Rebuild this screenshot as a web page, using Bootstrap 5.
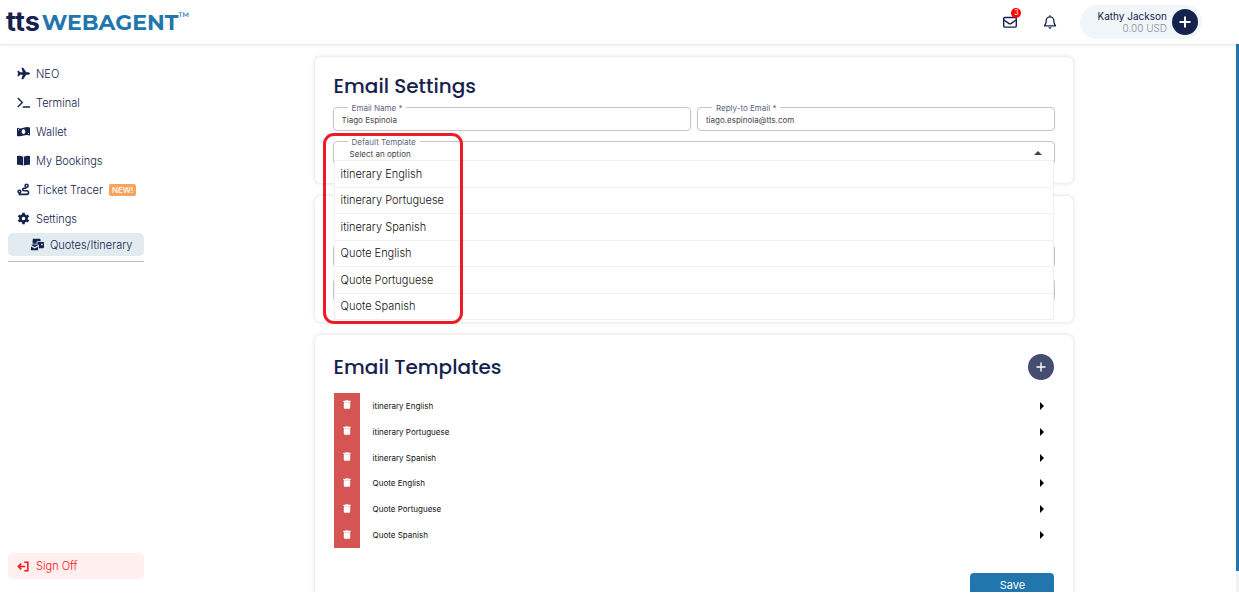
<!DOCTYPE html>
<html lang="en">
<head>
<meta charset="utf-8">
<meta name="viewport" content="width=device-width, initial-scale=1">
<title>Email Settings</title>
<link href="https://cdn.jsdelivr.net/npm/bootstrap@5.3.0/dist/css/bootstrap.min.css" rel="stylesheet">
<style>
:root { --navy: #14224d; --blue: #2176ae; --line: #c3c5d2; }
body { font-family: Inter, "Liberation Sans", sans-serif; font-size: 11px; font-weight: 300; line-height: 16px; color: #111; background: #fff; }
.app { height: 100vh; padding-bottom: 5px; }
.topbar { height: 44px; flex: none; padding: 0 37px 0 6px; box-shadow: 0 1px 3px rgba(0,0,0,.12); z-index: 5; }
.workspace { min-height: 0; }
.brand { font-family: Montserrat, Inter, sans-serif; font-weight: 700; font-size: 22px; line-height: 30px; color: var(--blue); text-decoration: none; }
.brand .web { padding-top: 2px; }
.brand .tts { font-family: Inter, sans-serif; font-size: 27px; color: var(--navy); margin-right: 2px; }
.brand .tm { font-size: 11px; line-height: 14px; font-weight: 500; align-self: flex-start; margin-top: 3px; }
.icon-btn { border: 0; background: none; padding: 0; width: 16px; height: 16px; line-height: 0; color: var(--navy); }
.count { position: absolute; top: -6px; right: -3px; width: 10px; height: 10px; border-radius: 50%; background: #f00; color: #fff; font-size: 7px; line-height: 10px; text-align: center; }
.profile { height: 34px; gap: 5px; padding: 0 4px 0 17px; margin-left: 22px; border-radius: 17px; background: #f0f6f9; color: var(--navy); font-size: 10px; font-weight: 400; line-height: 12px; }
.profile .amount { color: #8a90a0; font-weight: 300; }
.round-btn { width: 26px; height: 26px; border: 0; border-radius: 50%; padding: 0; background: var(--navy); color: #fff; line-height: 0; }
.round-btn.soft { background: #434e71; }
.side { width: 144px; padding: 15px 0 13px 8px; }
.side a { color: #14224d; text-decoration: none; height: 29px; padding-left: 9px; gap: 6px; }
.side svg { width: 13px; height: 13px; color: var(--navy); flex: none; }
.side .current { height: 23px; padding-left: 23px; background: #e1ebf0; border-radius: 5px; }
.side .rule { border-bottom: 1px solid #b9bcc9; height: 6px; }
.side .signoff, .side .signoff svg { color: #f11; }
.side .signoff { height: 26px; background: #ffefef; border-radius: 5px; }
.new-tag { background: #f9a45c; color: #fff; border-radius: 2px; font-size: 8px; line-height: 12px; font-weight: 500; padding: 0 3px; }
.stage { overflow: hidden; padding: 13px 0 0 8px; }
.panels { width: 70%; gap: 13px; }
.panel { border-radius: 6px; padding: 16px 18px; background: #fff; box-shadow: 0 0 4px rgba(0,0,0,.17); }
.short { height: 126px; }
.hidden-fields { gap: 10px; padding-bottom: 20px; }
.list-panel { padding: 19px 19px 16px 18px; }
.panel h2 { font-family: Poppins, Inter, sans-serif; font-weight: 500; font-size: 20px; line-height: 26px; color: var(--navy); margin: 0; padding-left: 1px; }
.pair { gap: 6px; margin: 8px 0 10px; }
.field { position: relative; }
.field label { position: absolute; left: 15px; top: -4px; padding: 0 4px; background: #fff; font-size: 8px; line-height: 10px; font-weight: 400; color: #5d6582; }
.box { display: block; width: 100%; height: 24px; border: 1px solid var(--line); border-radius: 4px; background: #fff; font-size: 8px; font-weight: 400; line-height: 12px; color: #444; padding: 1px 8px 0; appearance: none; }
select.box { padding-left: 16px; }
.caret { position: absolute; right: 13px; top: 10px; border: 4px solid transparent; border-top: 0; border-bottom-color: #444; }
.choices { position: absolute; z-index: 3; top: 19px; left: 1px; right: 1px; height: 160px; display: grid; grid-auto-rows: 1fr; background: #fff; border: 1px solid #f0f0f2; border-top: 0; margin: 0; padding: 0; list-style: none; }
.choices li { border-top: 1px solid #f0f0f2; padding-left: 6px; display: flex; align-items: center; }
.highlight { position: absolute; z-index: 4; left: -10px; top: -8px; width: 140px; height: 191px; border: 3px solid #ed1c24; border-radius: 11px; pointer-events: none; }
.templates { display: grid; grid-auto-rows: 1fr; height: 155px; margin: 13px 0 0 1px; padding: 0; list-style: none; font-size: 8px; font-weight: 400; }
.templates li { padding-right: 10px; gap: 13px; }
.trash { width: 26px; height: 100%; border: 0; padding: 0 0 2px; background: #d45554; color: #fff; line-height: 0; }
.open { border: 0; background: none; padding: 0 0 0 8px; line-height: 0; }
.arrow { display: block; border: 4px solid transparent; border-left-color: #000; border-right: 0; }
.save { width: 84px; height: 24px; margin-top: 25px; padding: 0; border: 0; border-radius: 4px 4px 4px 4px; background: var(--blue); color: #fff; font-size: 11px; font-weight: 400; line-height: 16px; }
.track { width: 3px; flex: none; background: #f2f2f2; padding-bottom: 21px; }
.thumb { background: var(--blue); height: 100%; }
</style>
</head>
<body>
<div class="app d-flex flex-column">
  <header class="topbar d-flex align-items-center position-relative">
    <a href="#" class="brand d-flex align-items-center"><span class="tts">tts</span><span class="web">WEBAGENT</span><span class="tm">™</span></a>
    <div class="d-flex align-items-center ms-auto">
      <button class="icon-btn position-relative me-4" aria-label="Messages"><svg width="16" height="16" viewBox="0 0 16 16" fill="none" stroke="currentColor" stroke-width="1.4"><rect x="1.7" y="3.5" width="12.6" height="9.6" rx="1"/><path d="M2 6l4.700 3.400q1.300.9 2.600 0L14 6"/></svg><span class="count">3</span></button>
      <button class="icon-btn" aria-label="Notifications"><svg width="16" height="16" viewBox="0 0 16 16" fill="none" stroke="currentColor" stroke-width="1.300"><path d="M8 1.200v1.500M2.500 11.800c1.700-1.800 1.700-3 1.700-5a3.800 3.900 0 0 1 7.600 0c0 2 0 3.200 1.700 5z" stroke-linejoin="round"/><path d="M6.500 13.300a1.500 1.500 0 0 0 3 0z" fill="currentColor" stroke="none"/></svg></button>
      <div class="profile d-flex align-items-center">
        <div class="text-end"><div>Kathy Jackson</div><div class="amount">0.00 USD</div></div>
        <button class="round-btn" aria-label="Open account"><svg width="14" height="14" viewBox="0 0 14 14" stroke="currentColor" stroke-width="2"><path d="M7 1.500v11M1.500 7h11"/></svg></button>
      </div>
    </div>
  </header>
  <div class="workspace d-flex flex-grow-1">
    <nav class="side d-flex flex-column flex-shrink-0">
      <a href="#" class="d-flex align-items-center"><svg viewBox="0 0 16 16" fill="currentColor"><path d="M5.500 1h2.200l3.600 5.500H14q2 .2 2 1.500t-2 1.500h-2.700L7.700 15H5.500L7 9.500H3.700L2.300 11.500H.5L1.300 8 .5 4.500h1.800l1.400 2H7z"/></svg>NEO</a>
      <a href="#" class="d-flex align-items-center"><svg viewBox="0 0 16 16" fill="none" stroke="currentColor" stroke-width="1.700"><path d="M1 2.500L6.500 8 1 13.500M7 13.500h9"/></svg>Terminal</a>
      <a href="#" class="d-flex align-items-center"><svg viewBox="0 0 16 16"><path d="M0 3.500q4 1.500 8 0t8-.5v10q-4-1.500-8 0t-8 .5z" fill="currentColor"/><ellipse cx="8" cy="8.200" rx="2.300" ry="3" fill="#fff"/><path d="M1.200 5.200l1.600.3-1.600 1.500zM14.800 11.300l-1.600-.3 1.600-1.500z" fill="#fff"/></svg>Wallet</a>
      <a href="#" class="d-flex align-items-center"><svg viewBox="0 0 16 16" fill="currentColor"><path d="M0 2.500q4-.8 7.500.8v11Q4 12.700 0 13.200zM16 2.500q-4-.8-7.500.8v11q3.500-1.600 7.500-1.100z"/></svg>My Bookings</a>
      <a href="#" class="d-flex align-items-center"><svg viewBox="0 0 16 16" fill="none" stroke="currentColor" stroke-width="1.900"><circle cx="11.800" cy="3.400" r="1.900"/><circle cx="3" cy="10.500" r="1.700"/><path d="M11.500 6.500H8.500a1.500 1.500 0 0 0 0 3H12a2.200 2.200 0 0 1 0 4.500H3v-2"/></svg>Ticket Tracer<span class="new-tag">NEW!</span></a>
      <a href="#" class="d-flex align-items-center"><svg viewBox="0 0 16 16"><circle cx="8" cy="8" r="3.800" fill="none" stroke="currentColor" stroke-width="3.200"/><path d="M8 .8v3M8 12.200v3M1.800 4.400l2.600 1.500M11.600 10.100l2.600 1.500M1.800 11.600l2.600-1.500M11.600 5.900l2.600-1.500" stroke="currentColor" stroke-width="3.200"/></svg>Settings</a>
      <a href="#" class="current d-flex align-items-center" aria-current="page"><svg viewBox="0 0 16 16" fill="currentColor"><path d="M2.500 1h8q1.300 0 1.300 1.500V4H7v3H2V2zM8 5h7q1 0 1 1v5.500q0 1-1 1H9.700V9.200Q9.700 8 8 8z"/><path d="M1 8h7.300v1.200L4.700 11 1 9.200zM0 10.500L4.700 12.800l4-2V15H0z"/><path d="M12.500 7h2v2h-2z" fill="#e1ebf0"/></svg>Quotes/Itinerary</a>
      <div class="rule"></div>
      <a href="#" class="signoff d-flex align-items-center mt-auto"><svg viewBox="0 0 16 16" fill="none" stroke="currentColor" stroke-width="1.900"><path d="M5.200 4.500L1.700 8l3.500 3.500M1.700 8H10M9 2.800h4.300v10.400H9"/></svg>Sign Off</a>
    </nav>
    <main class="stage flex-grow-1 d-flex flex-column align-items-center">
      <div class="panels d-flex flex-column">
        <section class="panel short flex-shrink-0">
          <h2>Email Settings</h2>
          <div class="pair d-flex">
            <div class="field flex-fill"><input class="box" id="name" value="Tiago Espinola"><label for="name">Email Name *</label></div>
            <div class="field flex-fill"><input class="box" id="reply" type="email" value="tiago.espinola@tts.com"><label for="reply">Reply-to Email *</label></div>
          </div>
          <div class="field">
            <select class="box" id="template"><option>Select an option</option></select><label for="template">Default Template</label>
            <span class="caret"></span>
            <ul class="choices" role="listbox" aria-labelledby="template">
              <li role="option">itinerary English</li><li role="option">itinerary Portuguese</li><li role="option">itinerary Spanish</li><li role="option">Quote English</li><li role="option">Quote Portuguese</li><li role="option">Quote Spanish</li>
            </ul>
            <div class="highlight"></div>
          </div>
        </section>
        <section class="panel short hidden-fields d-flex flex-column justify-content-end flex-shrink-0">
          <div class="box"></div><div class="box"></div>
        </section>
        <section class="panel list-panel flex-shrink-0">
          <div class="d-flex align-items-center justify-content-between"><h2>Email Templates</h2><button class="round-btn soft" aria-label="Add template"><svg width="12" height="12" viewBox="0 0 12 12" stroke="currentColor" stroke-width="1.400"><path d="M6 1.500v9M1.500 6h9"/></svg></button></div>
          <ul class="templates" id="templates"></ul>
          <div class="text-end"><button class="save">Save</button></div>
        </section>
      </div>
    </main>
    <div class="track"><div class="thumb"></div></div>
  </div>
</div>
<script>
document.getElementById('templates').innerHTML = ['itinerary English', 'itinerary Portuguese', 'itinerary Spanish', 'Quote English', 'Quote Portuguese', 'Quote Spanish'].map(function (t) {
  return '<li class="d-flex align-items-center"><button class="trash" aria-label="Delete"><svg width="8" height="9" viewBox="0 0 8 9" fill="currentColor"><path d="M.3.800h2.200L3 .2h2l.5.600h2.200v1.100H.3zM.8 2.300h6.400v5.500q0 1-1 1H1.800q-1 0-1-1z"/></svg></button><span>' + t + '</span><button class="open ms-auto" aria-label="Open"><span class="arrow"></span></button></li>';
}).join('');
</script>
<script src="https://cdn.jsdelivr.net/npm/bootstrap@5.3.0/dist/js/bootstrap.bundle.min.js"></script>
</body>
</html>
